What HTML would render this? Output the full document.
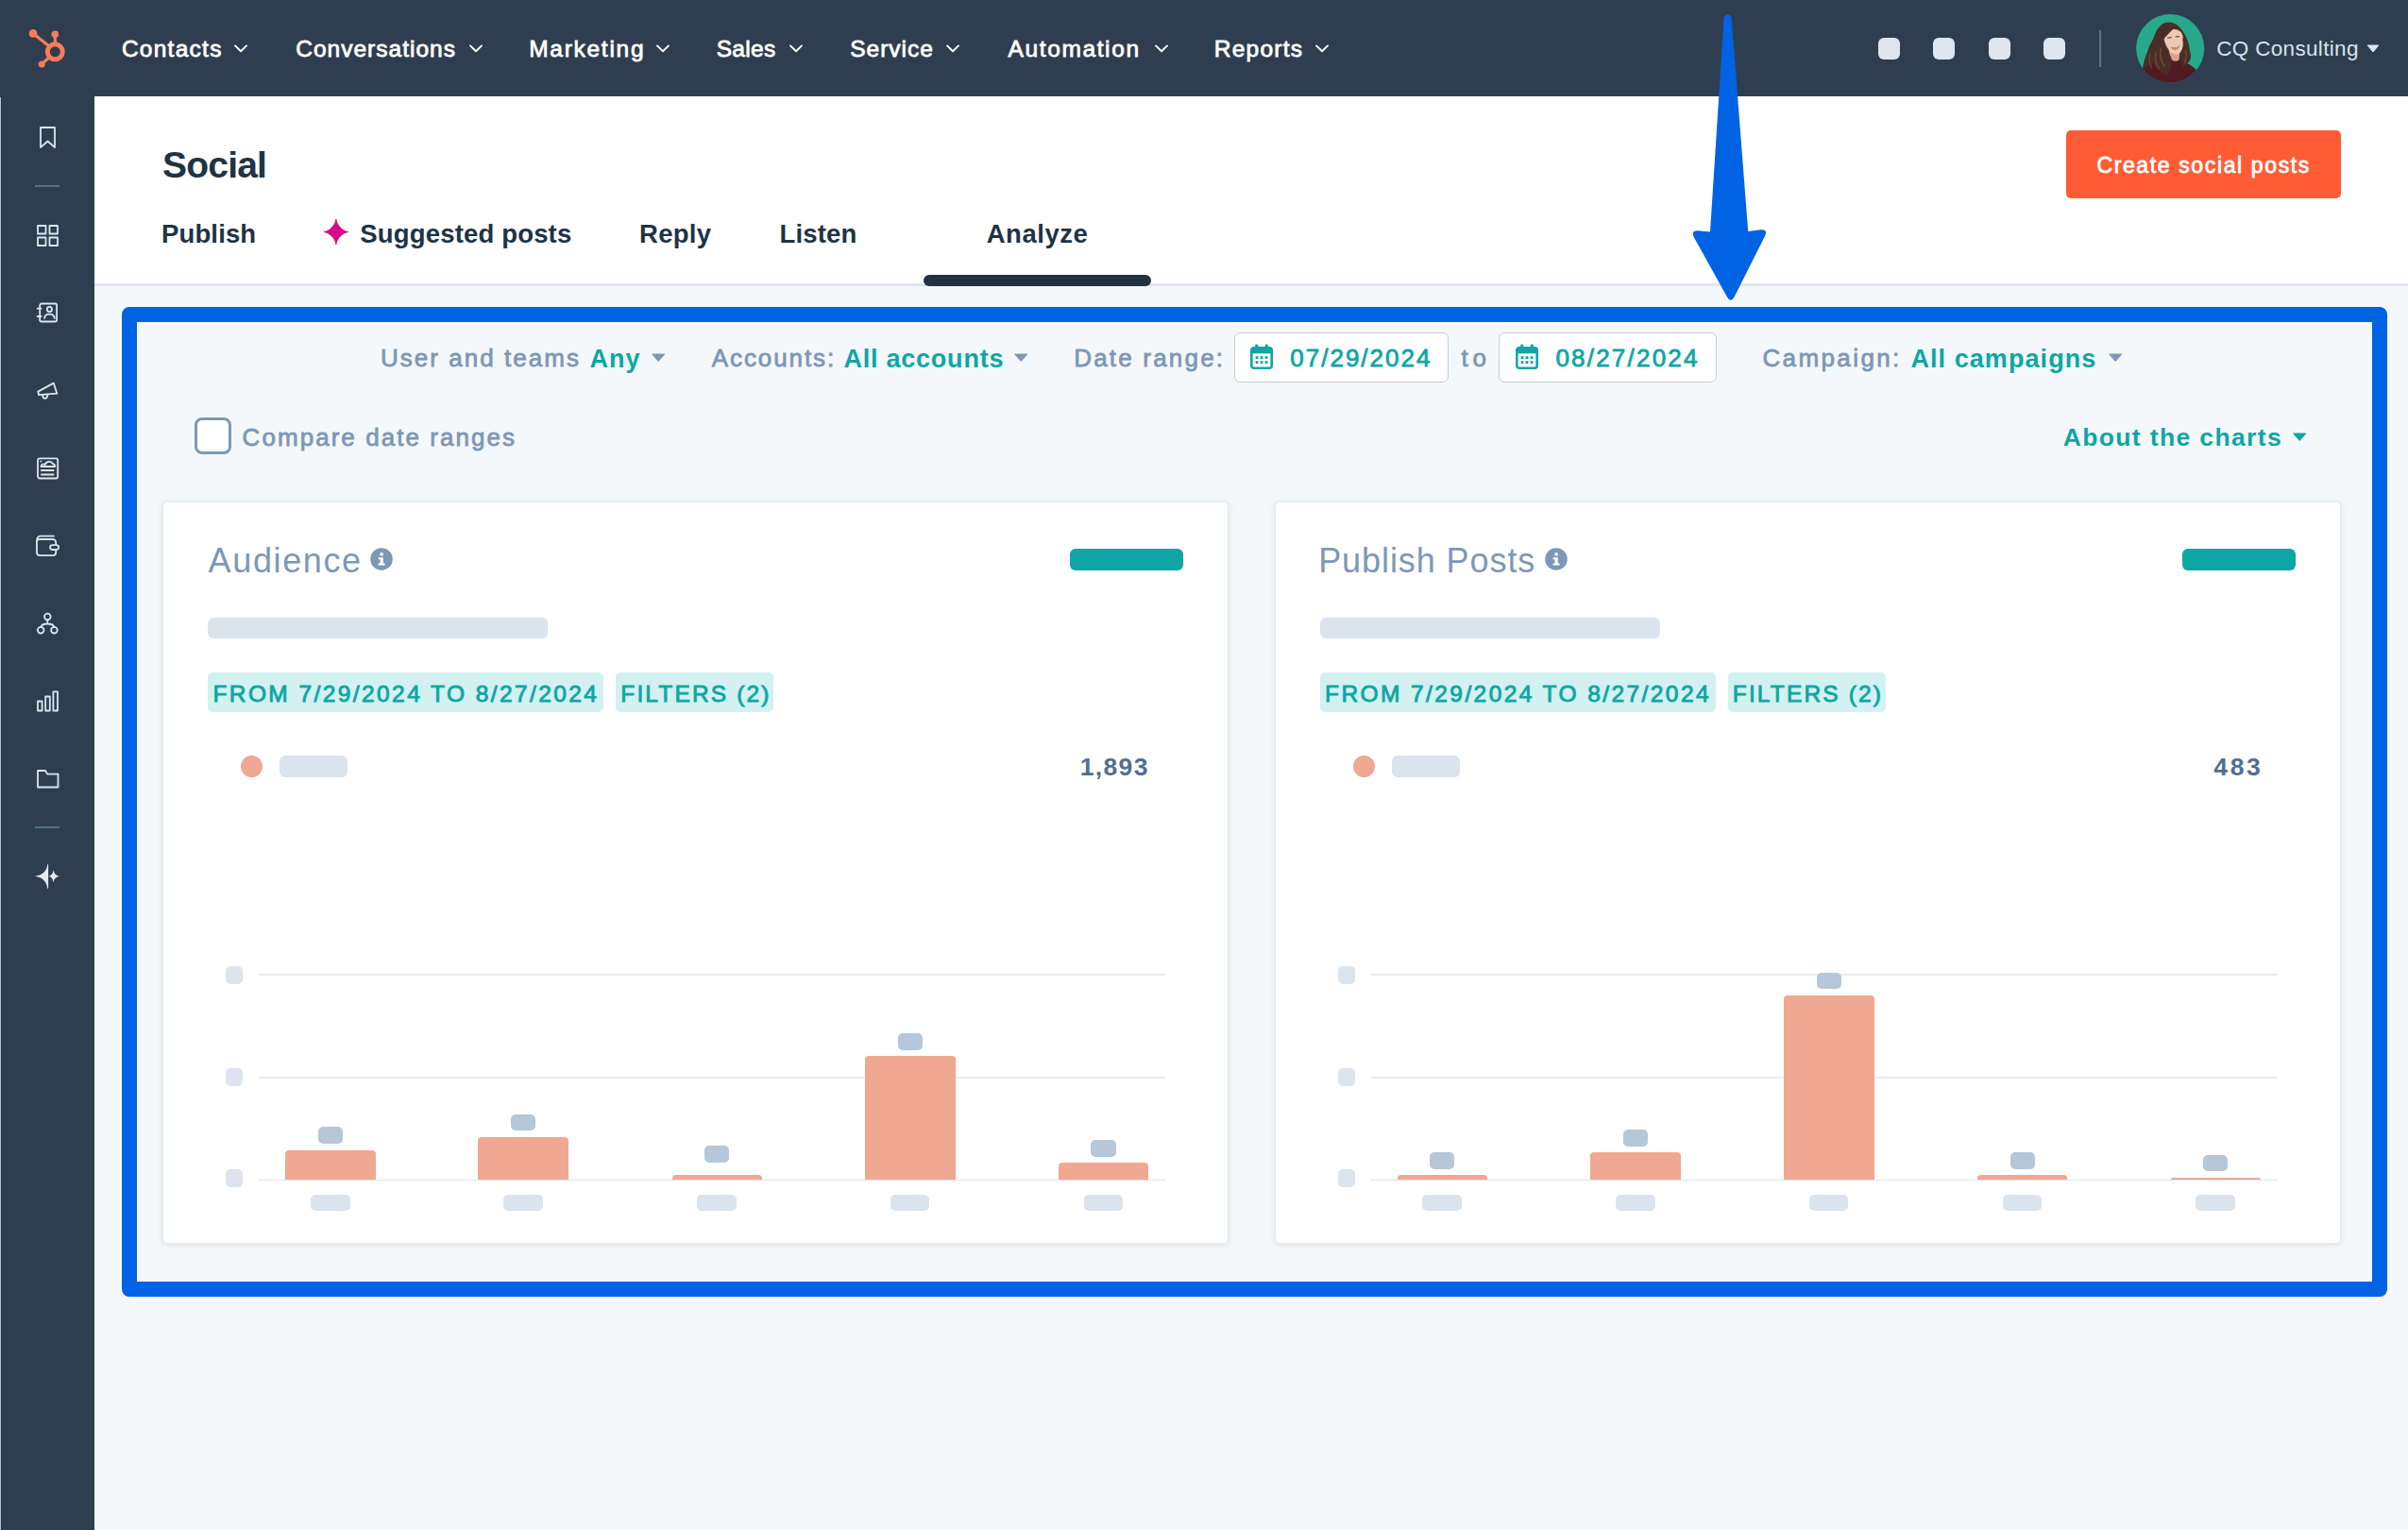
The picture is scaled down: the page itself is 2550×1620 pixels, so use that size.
<!DOCTYPE html>
<html lang="en">
<head>
<meta charset="utf-8">
<title>Social - Analyze</title>
<style>
*{box-sizing:border-box}
html,body{margin:0;padding:0}
body{width:2550px;height:1620px;position:relative;overflow:hidden;background:#f5f8fa;font-family:"Liberation Sans",sans-serif}
.abs{position:absolute}
.t{position:absolute;white-space:pre;line-height:1;font-family:"Liberation Sans",sans-serif}
#topnav{left:0;top:0;width:2550px;height:102.4px;background:#2e3e50}
#sidebar{left:0;top:102px;width:100px;height:1518px;background:#2e3e50}
#sideline{left:0;top:103px;width:1.2px;height:1517px;background:#b3c3d2;box-shadow:1px 0 0 #27374a}
#header{left:100px;top:102px;width:2450px;height:198px;background:#ffffff}
#hborder{left:100px;top:300px;width:2450px;height:3px;background:#dfe5ec}
.sq{width:23px;height:23px;border-radius:6px;background:#dce5f0;top:40px}
#navdiv{left:2223px;top:32px;width:2px;height:39px;background:#5c7590}
#btn{left:2188px;top:138px;width:290.6px;height:72px;border-radius:5px;background:#ff5c35}
#tabline{left:978px;top:291px;width:241px;height:12px;border-radius:6px;background:#213343}
#bluebox{left:129px;top:325px;width:2399px;height:1048px;border:16px solid #0063e3;border-radius:8px}
.datebox{top:351.5px;height:53px;border:1.6px solid #c3cdd9;border-radius:6px;background:#ffffff}
#chk{left:206px;top:442px;width:39px;height:39px;border:3px solid #7c98b6;border-radius:8px;background:#ffffff}
.card{top:531px;width:1129px;height:786px;background:#ffffff;border:1px solid #e3e9f0;border-radius:5px;box-shadow:0 1px 6px rgba(45,62,80,0.13)}
.pill{position:absolute;border-radius:6px}
.teal{background:#0ea6a5}
.gray{background:#dbe3ed}
.tag{position:absolute;top:712px;height:42px;border-radius:5px;background:#d3f1f1}
.dot{position:absolute;width:23px;height:23px;border-radius:50%;background:#f0a793;top:800px}
.grid{position:absolute;height:2px;background:#e9edf2}
.ysq{position:absolute;width:18px;height:19px;border-radius:5px;background:#dce4ee}
.bar{position:absolute;background:#f0a893;border-radius:4px 4px 0 0}
.bl{position:absolute;width:26.4px;height:17.8px;border-radius:5px;background:#b5c7d8}
.xl{position:absolute;width:41.7px;height:17.7px;border-radius:5px;background:#dbe3ed;top:1264.7px}
svg{position:absolute;overflow:visible}
</style>
</head>
<body>
<div class="abs" id="topnav"></div>
<div class="abs" id="sidebar"></div>
<div class="abs" id="sideline"></div>
<div class="abs" id="header"></div>
<div class="abs" id="hborder"></div>

<svg id="logo" style="left:0;top:0" width="100" height="102" viewBox="0 0 100 102">
<g fill="none" stroke="#ff7a59" stroke-linecap="round">
<circle cx="58.3" cy="54.8" r="8" stroke-width="4.9"/>
<line x1="58.3" y1="36.5" x2="58.3" y2="46" stroke-width="3.2"/>
<line x1="35.2" y1="35.6" x2="51.5" y2="48.6" stroke-width="3.2"/>
<line x1="44.3" y1="67.8" x2="52" y2="61" stroke-width="3.2"/>
</g>
<g fill="#ff7a59"><circle cx="58.3" cy="36.2" r="3.8"/><circle cx="35" cy="35.4" r="4.3"/><circle cx="44.2" cy="68" r="3.5"/></g>
</svg>
<svg style="left:247.8px;top:47px" width="14" height="9" viewBox="0 0 14 9"><path d="M1 1.4 L7 7.2 L13 1.4" fill="none" stroke="#ffffff" stroke-width="1.9" stroke-linecap="round" stroke-linejoin="round"/></svg>
<svg style="left:496.9px;top:47px" width="14" height="9" viewBox="0 0 14 9"><path d="M1 1.4 L7 7.2 L13 1.4" fill="none" stroke="#ffffff" stroke-width="1.9" stroke-linecap="round" stroke-linejoin="round"/></svg>
<svg style="left:694.6px;top:47px" width="14" height="9" viewBox="0 0 14 9"><path d="M1 1.4 L7 7.2 L13 1.4" fill="none" stroke="#ffffff" stroke-width="1.9" stroke-linecap="round" stroke-linejoin="round"/></svg>
<svg style="left:835.8px;top:47px" width="14" height="9" viewBox="0 0 14 9"><path d="M1 1.4 L7 7.2 L13 1.4" fill="none" stroke="#ffffff" stroke-width="1.9" stroke-linecap="round" stroke-linejoin="round"/></svg>
<svg style="left:1002.3px;top:47px" width="14" height="9" viewBox="0 0 14 9"><path d="M1 1.4 L7 7.2 L13 1.4" fill="none" stroke="#ffffff" stroke-width="1.9" stroke-linecap="round" stroke-linejoin="round"/></svg>
<svg style="left:1222.8px;top:47px" width="14" height="9" viewBox="0 0 14 9"><path d="M1 1.4 L7 7.2 L13 1.4" fill="none" stroke="#ffffff" stroke-width="1.9" stroke-linecap="round" stroke-linejoin="round"/></svg>
<svg style="left:1393.3px;top:47px" width="14" height="9" viewBox="0 0 14 9"><path d="M1 1.4 L7 7.2 L13 1.4" fill="none" stroke="#ffffff" stroke-width="1.9" stroke-linecap="round" stroke-linejoin="round"/></svg>
<div class="abs sq" style="left:1988.6px"></div>
<div class="abs sq" style="left:2047.2px"></div>
<div class="abs sq" style="left:2105.7px"></div>
<div class="abs sq" style="left:2164.3px"></div>
<div class="abs" id="navdiv"></div>
<svg id="avatar" style="left:2262.3px;top:14.9px" width="72.4" height="72.4" viewBox="0 0 72.4 72.4">
<defs><clipPath id="avc"><circle cx="36.2" cy="36.2" r="36.1"/></clipPath></defs>
<g clip-path="url(#avc)">
<rect width="73" height="73" fill="#28a98c"/>
<path d="M34.6 8.6 C30 8.6 27.5 10.4 25.5 12.5 C23 15 21.8 17 20.6 20 C19.4 23 18.6 25 17.4 27.5 C16.4 30 15 31.5 14 34 C12.6 37.5 12.6 39 11.4 41.5 C10.2 44.5 9.4 46 8.6 49.5 C7.8 53 7.4 55 7 58 L18 73 L50 73 L53.4 61.5 C52.6 57.5 53 55 54 52 C56.6 50 58 47.5 57.8 44 C57.6 41 57 39 56.6 36.5 C56.2 33 55.6 31 54.8 28.5 C54 25.5 53 23.8 51.6 21.5 C50.2 19 49 17.5 47.4 15.6 C45 12.5 41.5 8.6 34.6 8.6 Z" fill="#4a2e25"/>
<path d="M5 59 C10 54.5 18 52 27 50 L38.5 47.2 L47 49 C53 50.8 59.5 54.5 65 60 L60 73 L13 73 Z" fill="#4f1b23"/>
<path d="M34.5 38 L46.5 37 L45.6 48.2 C43 50.6 39.5 50.4 37 47.6 Z" fill="#d7a58f"/>
<path d="M29 24.5 C28.2 18.5 31.5 14 37.5 13.4 C43.5 12.9 48 16.8 49.4 23 C50.4 28 50.2 33.5 48.6 37.5 C47 41.5 44 43.2 41.2 42.6 C36.5 41.6 31 35 29 24.5 Z" fill="#ecc8b5"/>
<path d="M36.5 34 C39.5 36 44 35.6 46.8 32.2 C46 36.4 42.6 38.6 39.8 37.8 C38 37.2 37 35.8 36.5 34 Z" fill="#c58473"/>
<path d="M33.5 25.2 L37.2 24.6 M42 24 L45.6 23.6" stroke="#5a3a30" stroke-width="1.1" stroke-linecap="round" fill="none"/>
<path d="M28.6 27 C27 19 30.5 12 37.5 11.2 C44 10.6 48.5 14.5 50 21.5 C47 17.5 43 15.6 38.8 16.2 C35.5 19.5 32.5 22.5 28.6 27 Z" fill="#4a2e25"/>
<path d="M29 24 C30.2 32.5 33 40 37.2 45.5 C38.4 51 36.5 58.5 33.5 65 C25 63 19 56 17.5 48 C19.5 39.5 24.5 31.5 29 24 Z" fill="#4a2e25"/>
<path d="M49 25.5 C50.6 32.5 50.4 38 48 42.4 C47.4 47.5 48.4 52.5 51 58.5 L54 52 C56.6 50 58 47.5 57.8 44 C57 36.5 54 29 49 25.5 Z" fill="#4a2e25"/>
<path d="M21.5 40 C19.5 46 20.5 52 24.5 57 M26.5 36 C24.5 43 26.5 50 30.5 55.5 M15 42 C13.5 47 14 52 16.5 56.5 M52.4 38 C53.9 43 52.9 48 51.4 52" fill="none" stroke="#7b5747" stroke-width="1.2" stroke-linecap="round" opacity="0.75"/>
</g>
</svg>
<svg style="left:2506px;top:47px" width="14" height="9" viewBox="0 0 14 9"><path d="M1.2 1 L12.8 1 L7 8 Z" fill="#dfe6ee" stroke="#dfe6ee" stroke-width="1" stroke-linejoin="round"/></svg>
<svg style="left:38px;top:132px" width="26" height="28" viewBox="0 0 26 28"><path d="M5 3 H20 V24 L12.5 17.5 L5 24 Z" fill="none" stroke="#dde5f0" stroke-width="1.8" stroke-linecap="round" stroke-linejoin="round"/></svg>
<div class="abs" style="left:37px;top:196px;width:26px;height:2px;background:#516f90"></div>
<svg style="left:38px;top:237px" width="26" height="26" viewBox="0 0 26 26"><rect x="2" y="2" width="8.5" height="8.5" fill="none" stroke="#dde5f0" stroke-width="1.8" stroke-linecap="round" stroke-linejoin="round"/><rect x="14.5" y="2" width="8.5" height="8.5" fill="none" stroke="#dde5f0" stroke-width="1.8" stroke-linecap="round" stroke-linejoin="round"/><rect x="2" y="14.5" width="8.5" height="8.5" fill="none" stroke="#dde5f0" stroke-width="1.8" stroke-linecap="round" stroke-linejoin="round"/><rect x="14.5" y="14.5" width="8.5" height="8.5" fill="none" stroke="#dde5f0" stroke-width="1.8" stroke-linecap="round" stroke-linejoin="round"/></svg>
<svg style="left:38px;top:319px" width="26" height="26" viewBox="0 0 26 26"><rect x="4.2" y="2.5" width="17.9" height="19" rx="1.8" fill="none" stroke="#dde5f0" stroke-width="1.8" stroke-linecap="round" stroke-linejoin="round"/><path d="M1.6 7.6 H5.6 M1.6 16 H5.6" fill="none" stroke="#dde5f0" stroke-width="1.8" stroke-linecap="round" stroke-linejoin="round"/><circle cx="14.4" cy="8.4" r="2.6" fill="none" stroke="#dde5f0" stroke-width="1.8" stroke-linecap="round" stroke-linejoin="round"/><path d="M9 17.8 C9.5 14.6 11.5 13.6 14.4 13.6 C17.3 13.6 19.3 14.6 19.8 17.8" fill="none" stroke="#dde5f0" stroke-width="1.8" stroke-linecap="round" stroke-linejoin="round"/></svg>
<svg style="left:38px;top:401px" width="26" height="26" viewBox="0 0 26 26"><path d="M2.3 13.6 L18.8 4.6 L22.3 15.7 L3.1 17.2 Z" fill="none" stroke="#dde5f0" stroke-width="1.8" stroke-linecap="round" stroke-linejoin="round"/><path d="M7.2 17.4 C7.2 19.6 8.4 20.8 9.8 20.8 C11.2 20.8 12.2 19.8 12.4 17.2" fill="none" stroke="#dde5f0" stroke-width="1.8" stroke-linecap="round" stroke-linejoin="round"/></svg>
<svg style="left:38px;top:483px" width="26" height="26" viewBox="0 0 26 26"><rect x="2" y="2.3" width="21.2" height="21.2" rx="2" fill="none" stroke="#dde5f0" stroke-width="1.8" stroke-linecap="round" stroke-linejoin="round"/><path d="M5.8 15 H18.6 M5.8 19.5 H18.6" fill="none" stroke="#dde5f0" stroke-width="1.8" stroke-linecap="round" stroke-linejoin="round"/><path d="M5.4 11 C5.6 8.6 8.2 7.8 9.8 8.9 C10.8 5.2 16.6 4.8 17.9 8.2 C19.6 8.2 20.3 9.6 20.2 11 Z" fill="none" stroke="#dde5f0" stroke-width="1.8" stroke-linecap="round" stroke-linejoin="round" stroke-width="1.6"/><circle cx="5.4" cy="5.4" r="0.9" fill="#dde5f0"/></svg>
<svg style="left:37px;top:565px" width="28" height="26" viewBox="0 0 28 26"><path d="M2 8 C2 4.2 3.4 2.6 6.2 2.6 H20" fill="none" stroke="#dde5f0" stroke-width="1.8" stroke-linecap="round" stroke-linejoin="round"/><path d="M2 8 V19.4 C2 22 3.4 23.2 6 23.2 H18.4 C21 23.2 22.2 22 22.2 19.4 V17.6 M22.2 11.6 V9.8 C22.2 7.3 21 6 18.4 6 H5.6 C3.6 6 2 6.6 2 8" fill="none" stroke="#dde5f0" stroke-width="1.8" stroke-linecap="round" stroke-linejoin="round"/><rect x="16.1" y="12.2" width="9" height="4.8" rx="2.4" fill="none" stroke="#dde5f0" stroke-width="1.8" stroke-linecap="round" stroke-linejoin="round"/></svg>
<svg style="left:38px;top:648px" width="26" height="26" viewBox="0 0 26 26"><circle cx="12.3" cy="5" r="3.3" fill="none" stroke="#dde5f0" stroke-width="1.8" stroke-linecap="round" stroke-linejoin="round"/><circle cx="5.2" cy="19.2" r="3.3" fill="none" stroke="#dde5f0" stroke-width="1.8" stroke-linecap="round" stroke-linejoin="round"/><circle cx="19.4" cy="19.2" r="3.3" fill="none" stroke="#dde5f0" stroke-width="1.8" stroke-linecap="round" stroke-linejoin="round"/><path d="M12.3 8.3 V12.5 M5.5 16 C5.8 13.5 7.5 12.5 12.3 12.5 C17 12.5 18.8 13.5 19.1 16" fill="none" stroke="#dde5f0" stroke-width="1.8" stroke-linecap="round" stroke-linejoin="round"/></svg>
<svg style="left:38px;top:730px" width="26" height="26" viewBox="0 0 26 26"><rect x="2" y="12.5" width="4.6" height="10" fill="none" stroke="#dde5f0" stroke-width="1.8" stroke-linecap="round" stroke-linejoin="round"/><rect x="10.2" y="7.5" width="4.6" height="15" fill="none" stroke="#dde5f0" stroke-width="1.8" stroke-linecap="round" stroke-linejoin="round"/><rect x="18.4" y="2.3" width="4.6" height="20.2" fill="none" stroke="#dde5f0" stroke-width="1.8" stroke-linecap="round" stroke-linejoin="round"/></svg>
<svg style="left:38px;top:813px" width="26" height="24" viewBox="0 0 26 24"><path d="M2 3 H10 L12.2 6.6 H23.5 V20.5 H2 Z" fill="none" stroke="#dde5f0" stroke-width="1.8" stroke-linecap="round" stroke-linejoin="round"/></svg>
<div class="abs" style="left:37px;top:875px;width:26px;height:2px;background:#516f90"></div>
<svg style="left:36px;top:914px" width="30" height="30" viewBox="0 0 30 30"><path d="M14.4 0.8 L15.1 1.6 L15.1 26.4 L14.4 27.2 C13.4 19.6 9.6 15.2 1.2 13.8 C9.6 12.3 13.4 8.4 14.4 0.8 Z" fill="#e3e9f3"/><path d="M20.6 7 C21.2 11 23 12.9 27.3 13.8 C23 14.6 21.2 16.5 20.6 20.4 C20 16.5 18.6 14.6 15.3 13.8 C18.6 12.9 20 11 20.6 7 Z" fill="#e3e9f3"/></svg>
<div class="abs" id="btn"></div>
<svg style="left:343px;top:232.4px" width="26" height="27" viewBox="0 0 26 27"><path d="M12.40 0.00 L13.40 0.00 C13.60 3.45 15.30 6.25 17.70 8.65 C20.10 11.05 22.90 12.75 25.80 12.95 L25.80 13.95 C22.90 14.15 20.10 15.85 17.70 18.25 C15.30 20.65 13.60 23.45 13.40 26.90 L12.40 26.90 C12.20 23.45 10.50 20.65 8.10 18.25 C5.70 15.85 2.90 14.15 0.00 13.95 L0.00 12.95 C2.90 12.75 5.70 11.05 8.10 8.65 C10.50 6.25 12.20 3.45 12.40 0.00 Z" fill="#d4098b"/></svg>
<div class="abs" id="tabline"></div>
<div class="abs" id="bluebox"></div>
<svg style="left:690.2px;top:373.5px" width="14.5" height="9" viewBox="0 0 14.5 9"><path d="M1 1 L13.5 1 L7.25 8.2 Z" fill="#7c98b6" stroke="#7c98b6" stroke-width="1.2" stroke-linejoin="round"/></svg>
<svg style="left:1074.4px;top:373.5px" width="14.5" height="9" viewBox="0 0 14.5 9"><path d="M1 1 L13.5 1 L7.25 8.2 Z" fill="#7c98b6" stroke="#7c98b6" stroke-width="1.2" stroke-linejoin="round"/></svg>
<svg style="left:2232.5px;top:373.5px" width="14.5" height="9" viewBox="0 0 14.5 9"><path d="M1 1 L13.5 1 L7.25 8.2 Z" fill="#7c98b6" stroke="#7c98b6" stroke-width="1.2" stroke-linejoin="round"/></svg>
<svg style="left:2428.4px;top:457.6px" width="14.5" height="9" viewBox="0 0 14.5 9"><path d="M1 1 L13.5 1 L7.25 8.2 Z" fill="#0ea6a5" stroke="#0ea6a5" stroke-width="1.2" stroke-linejoin="round"/></svg>
<div class="abs datebox" style="left:1306.5px;width:227.5px"></div>
<div class="abs datebox" style="left:1587px;width:231px"></div>
<svg style="left:1324.3px;top:364.4px" width="24" height="27" viewBox="0 0 24 27"><rect x="1.3" y="4.3" width="21.4" height="21.4" rx="2.5" fill="none" stroke="#0ea6a5" stroke-width="2.6"/><rect x="1.3" y="4.3" width="21.4" height="6" fill="#0ea6a5"/><rect x="5.2" y="0.5" width="3" height="6" rx="1" fill="#0ea6a5"/><rect x="15.8" y="0.5" width="3" height="6" rx="1" fill="#0ea6a5"/>
<g fill="#0ea6a5"><rect x="5.6" y="13.2" width="2.8" height="2.8"/><rect x="10.6" y="13.2" width="2.8" height="2.8"/><rect x="15.6" y="13.2" width="2.8" height="2.8"/><rect x="5.6" y="18.2" width="2.8" height="2.8"/><rect x="10.6" y="18.2" width="2.8" height="2.8"/><rect x="15.6" y="18.2" width="2.8" height="2.8"/></g></svg>
<svg style="left:1605.2px;top:364.4px" width="24" height="27" viewBox="0 0 24 27"><rect x="1.3" y="4.3" width="21.4" height="21.4" rx="2.5" fill="none" stroke="#0ea6a5" stroke-width="2.6"/><rect x="1.3" y="4.3" width="21.4" height="6" fill="#0ea6a5"/><rect x="5.2" y="0.5" width="3" height="6" rx="1" fill="#0ea6a5"/><rect x="15.8" y="0.5" width="3" height="6" rx="1" fill="#0ea6a5"/>
<g fill="#0ea6a5"><rect x="5.6" y="13.2" width="2.8" height="2.8"/><rect x="10.6" y="13.2" width="2.8" height="2.8"/><rect x="15.6" y="13.2" width="2.8" height="2.8"/><rect x="5.6" y="18.2" width="2.8" height="2.8"/><rect x="10.6" y="18.2" width="2.8" height="2.8"/><rect x="15.6" y="18.2" width="2.8" height="2.8"/></g></svg>
<div class="abs" id="chk"></div>
<div class="abs card" style="left:172.3px"></div>
<svg style="left:392px;top:580.4px" width="24" height="24" viewBox="0 0 24 24"><circle cx="12" cy="12" r="11.8" fill="#7c98b6"/><rect x="10.4" y="5.2" width="3.4" height="3.3" rx="0.8" fill="#fff"/><path d="M8.6 10.3 H13.8 V16.6 H15.6 V18.6 H8.6 V16.6 H10.5 V12.3 H8.6 Z" fill="#fff"/></svg>
<div class="pill teal" style="left:1133.0px;top:581px;width:120px;height:23px"></div>
<div class="pill gray" style="left:220.0px;top:654px;width:360px;height:22px"></div>
<div class="tag" style="left:219.9px;width:419.5px"></div>
<div class="tag" style="left:651.8px;width:167.5px"></div>
<div class="dot" style="left:255.3px"></div>
<div class="pill gray" style="left:296.2px;top:800px;width:72px;height:23px"></div>
<div class="grid" style="left:273.6px;top:1031px;width:960.3px;height:2px;background:#e9ebee"></div>
<div class="grid" style="left:273.6px;top:1139.5px;width:960.3px;height:2px;background:#e9ebee"></div>
<div class="grid" style="left:273.6px;top:1249px;width:960.3px;height:1.3px;background:#dbe3ec"></div>
<div class="ysq" style="left:239.0px;top:1023px"></div>
<div class="ysq" style="left:239.0px;top:1130.5px"></div>
<div class="ysq" style="left:239.0px;top:1237.7px"></div>
<div class="bar" style="left:302.0px;top:1217.6px;width:95.7px;height:31.7px"></div>
<div class="bl" style="left:336.7px;top:1193.4px"></div>
<div class="xl" style="left:328.9px"></div>
<div class="bar" style="left:506.3px;top:1203.7px;width:95.7px;height:45.6px"></div>
<div class="bl" style="left:540.9px;top:1179.5px"></div>
<div class="xl" style="left:533.1px"></div>
<div class="bar" style="left:711.6px;top:1244.0px;width:95.2px;height:5.3px"></div>
<div class="bl" style="left:746.0px;top:1213.3px"></div>
<div class="xl" style="left:738.2px"></div>
<div class="bar" style="left:916.0px;top:1118.0px;width:95.6px;height:131.3px"></div>
<div class="bl" style="left:950.6px;top:1093.8px"></div>
<div class="xl" style="left:942.8px"></div>
<div class="bar" style="left:1120.7px;top:1231.1px;width:95.7px;height:18.2px"></div>
<div class="bl" style="left:1155.4px;top:1206.9px"></div>
<div class="xl" style="left:1147.6px"></div>
<div class="abs card" style="left:1350.0px"></div>
<svg style="left:1635.8px;top:580.4px" width="24" height="24" viewBox="0 0 24 24"><circle cx="12" cy="12" r="11.8" fill="#7c98b6"/><rect x="10.4" y="5.2" width="3.4" height="3.3" rx="0.8" fill="#fff"/><path d="M8.6 10.3 H13.8 V16.6 H15.6 V18.6 H8.6 V16.6 H10.5 V12.3 H8.6 Z" fill="#fff"/></svg>
<div class="pill teal" style="left:2310.7px;top:581px;width:120px;height:23px"></div>
<div class="pill gray" style="left:1397.7px;top:654px;width:360px;height:22px"></div>
<div class="tag" style="left:1397.6px;width:419.5px"></div>
<div class="tag" style="left:1829.5px;width:167.5px"></div>
<div class="dot" style="left:1433.0px"></div>
<div class="pill gray" style="left:1473.9px;top:800px;width:72px;height:23px"></div>
<div class="grid" style="left:1451.6px;top:1031px;width:960.3px;height:2px;background:#e9ebee"></div>
<div class="grid" style="left:1451.6px;top:1139.5px;width:960.3px;height:2px;background:#e9ebee"></div>
<div class="grid" style="left:1451.6px;top:1249px;width:960.3px;height:1.3px;background:#dbe3ec"></div>
<div class="ysq" style="left:1416.7px;top:1023px"></div>
<div class="ysq" style="left:1416.7px;top:1130.5px"></div>
<div class="ysq" style="left:1416.7px;top:1237.7px"></div>
<div class="bar" style="left:1479.5px;top:1244.2px;width:95.2px;height:5.1px"></div>
<div class="bl" style="left:1513.9px;top:1220.0px"></div>
<div class="xl" style="left:1506.1px"></div>
<div class="bar" style="left:1684.1px;top:1220.4px;width:95.8px;height:28.9px"></div>
<div class="bl" style="left:1718.8px;top:1196.2px"></div>
<div class="xl" style="left:1711.0px"></div>
<div class="bar" style="left:1888.8px;top:1053.7px;width:95.8px;height:195.6px"></div>
<div class="bl" style="left:1923.5px;top:1029.5px"></div>
<div class="xl" style="left:1915.7px"></div>
<div class="bar" style="left:2094.0px;top:1244.2px;width:95.3px;height:5.1px"></div>
<div class="bl" style="left:2128.5px;top:1220.0px"></div>
<div class="xl" style="left:2120.7px"></div>
<div class="bar" style="left:2298.7px;top:1246.8px;width:95.2px;height:2.5px"></div>
<div class="bl" style="left:2333.1px;top:1222.6px"></div>
<div class="xl" style="left:2325.3px"></div>
<span class="t" id="tx-n1" style="left:128.9px;top:39.5px;font-size:24.5px;letter-spacing:1.26px;color:#ffffff;-webkit-text-stroke:0.8px #ffffff;">Contacts</span>
<span class="t" id="tx-n2" style="left:313.3px;top:39.5px;font-size:24.5px;letter-spacing:1.0px;color:#ffffff;-webkit-text-stroke:0.8px #ffffff;">Conversations</span>
<span class="t" id="tx-n3" style="left:560.2px;top:39.5px;font-size:24.5px;letter-spacing:1.72px;color:#ffffff;-webkit-text-stroke:0.8px #ffffff;">Marketing</span>
<span class="t" id="tx-n4" style="left:758.7px;top:39.5px;font-size:24.5px;letter-spacing:0.29px;color:#ffffff;-webkit-text-stroke:0.8px #ffffff;">Sales</span>
<span class="t" id="tx-n5" style="left:900.3px;top:39.5px;font-size:24.5px;letter-spacing:0.97px;color:#ffffff;-webkit-text-stroke:0.8px #ffffff;">Service</span>
<span class="t" id="tx-n6" style="left:1067.5px;top:39.5px;font-size:24.5px;letter-spacing:1.62px;color:#ffffff;-webkit-text-stroke:0.8px #ffffff;">Automation</span>
<span class="t" id="tx-n7" style="left:1285.7px;top:39.5px;font-size:24.5px;letter-spacing:1.26px;color:#ffffff;-webkit-text-stroke:0.8px #ffffff;">Reports</span>
<span class="t" id="tx-acct" style="left:2347.2px;top:40.5px;font-size:22.5px;letter-spacing:0.33px;color:#d9e2ee;">CQ Consulting</span>
<span class="t" id="tx-title" style="left:172.0px;top:154.5px;font-size:39.0px;letter-spacing:-0.8px;color:#213343;font-weight:700;">Social</span>
<span class="t" id="tx-t1" style="left:171.0px;top:233.5px;font-size:27.5px;letter-spacing:0.14px;color:#213343;font-weight:700;">Publish</span>
<span class="t" id="tx-t2" style="left:381.3px;top:233.5px;font-size:27.5px;letter-spacing:0.17px;color:#213343;font-weight:700;">Suggested posts</span>
<span class="t" id="tx-t3" style="left:677.1px;top:233.5px;font-size:27.5px;letter-spacing:0.24px;color:#213343;font-weight:700;">Reply</span>
<span class="t" id="tx-t4" style="left:825.4px;top:233.5px;font-size:27.5px;letter-spacing:0.2px;color:#213343;font-weight:700;">Listen</span>
<span class="t" id="tx-t5" style="left:1044.7px;top:233.5px;font-size:27.5px;letter-spacing:0.53px;color:#213343;font-weight:700;">Analyze</span>
<span class="t" id="tx-btn" style="left:2220.4px;top:163.5px;font-size:23.0px;letter-spacing:1.63px;color:#ffffff;-webkit-text-stroke:0.8px #ffffff;">Create social posts</span>
<span class="t" id="tx-f1" style="left:402.9px;top:365.5px;font-size:26.0px;letter-spacing:2.04px;color:#7c98b6;-webkit-text-stroke:0.8px #7c98b6;">User and teams</span>
<span class="t" id="tx-f2" style="left:624.5px;top:366.5px;font-size:27.0px;letter-spacing:1.0px;color:#0ea6a5;font-weight:700;">Any</span>
<span class="t" id="tx-f3" style="left:753.8px;top:365.5px;font-size:26.0px;letter-spacing:1.9px;color:#7c98b6;-webkit-text-stroke:0.8px #7c98b6;">Accounts:</span>
<span class="t" id="tx-f4" style="left:893.5px;top:366.5px;font-size:27.0px;letter-spacing:0.76px;color:#0ea6a5;font-weight:700;">All accounts</span>
<span class="t" id="tx-f5" style="left:1137.2px;top:365.5px;font-size:26.0px;letter-spacing:2.2px;color:#7c98b6;-webkit-text-stroke:0.8px #7c98b6;">Date range:</span>
<span class="t" id="tx-d1" style="left:1366.3px;top:365.5px;font-size:26.0px;letter-spacing:2.0px;color:#0ea6a5;-webkit-text-stroke:0.8px #0ea6a5;">07/29/2024</span>
<span class="t" id="tx-f6" style="left:1547.4px;top:365.5px;font-size:26.0px;letter-spacing:5.0px;color:#7c98b6;-webkit-text-stroke:0.8px #7c98b6;">to</span>
<span class="t" id="tx-d2" style="left:1647.4px;top:365.5px;font-size:26.0px;letter-spacing:2.22px;color:#0ea6a5;-webkit-text-stroke:0.8px #0ea6a5;">08/27/2024</span>
<span class="t" id="tx-f7" style="left:1866.4px;top:365.5px;font-size:26.0px;letter-spacing:2.4px;color:#7c98b6;-webkit-text-stroke:0.8px #7c98b6;">Campaign:</span>
<span class="t" id="tx-f8" style="left:2023.4px;top:366.5px;font-size:27.0px;letter-spacing:1.07px;color:#0ea6a5;font-weight:700;">All campaigns</span>
<span class="t" id="tx-cmp" style="left:256.6px;top:449.5px;font-size:26.0px;letter-spacing:2.05px;color:#7c98b6;-webkit-text-stroke:0.8px #7c98b6;">Compare date ranges</span>
<span class="t" id="tx-abt" style="left:2184.7px;top:449.5px;font-size:26.5px;letter-spacing:1.36px;color:#0ea6a5;font-weight:700;">About the charts</span>
<span class="t" id="tx-c1t" style="left:220.6px;top:575.5px;font-size:36.0px;letter-spacing:1.63px;color:#7c98b6;">Audience</span>
<span class="t" id="tx-c2t" style="left:1396.2px;top:575.5px;font-size:36.0px;letter-spacing:0.92px;color:#7c98b6;">Publish Posts</span>
<span class="t" id="tx-g1a" style="left:225.4px;top:722.5px;font-size:24.5px;letter-spacing:2.42px;color:#0ea6a5;-webkit-text-stroke:0.9px #0ea6a5;">FROM 7/29/2024 TO 8/27/2024</span>
<span class="t" id="tx-g1b" style="left:657.3px;top:722.5px;font-size:24.5px;letter-spacing:2.14px;color:#0ea6a5;-webkit-text-stroke:0.9px #0ea6a5;">FILTERS (2)</span>
<span class="t" id="tx-g2a" style="left:1403.0px;top:722.5px;font-size:24.5px;letter-spacing:2.42px;color:#0ea6a5;-webkit-text-stroke:0.9px #0ea6a5;">FROM 7/29/2024 TO 8/27/2024</span>
<span class="t" id="tx-g2b" style="left:1834.8px;top:722.5px;font-size:24.5px;letter-spacing:2.14px;color:#0ea6a5;-webkit-text-stroke:0.9px #0ea6a5;">FILTERS (2)</span>
<span class="t" id="tx-v1" style="left:1143.7px;top:798.5px;font-size:26.5px;letter-spacing:1.35px;color:#516f90;font-weight:700;">1,893</span>
<span class="t" id="tx-v2" style="left:2344.3px;top:798.5px;font-size:26.5px;letter-spacing:2.6px;color:#516f90;font-weight:700;">483</span>
<svg id="arrow" style="left:0;top:0" width="2550" height="340" viewBox="0 0 2550 340"><path d="M1825.6 18.5 Q1829.6 11.5 1833.6 18.5 L1851.2 245 L1864.5 243.2 Q1872.5 242.5 1869 250 L1836.5 314.5 Q1832.7 321 1829 314.5 L1794 251.5 Q1790 244 1798 244.2 L1811 245.5 Z" fill="#0063e3"/></svg>
</body>
</html>
